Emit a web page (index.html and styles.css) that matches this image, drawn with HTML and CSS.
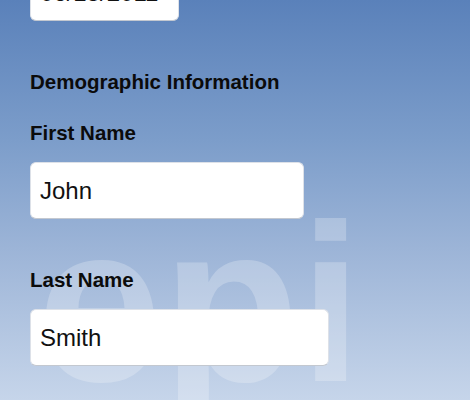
FILE: index.html
```html
<!DOCTYPE html>
<html lang="en">
<head>
<meta charset="utf-8">
<title>Demographic Information</title>
<link rel="stylesheet" href="styles.css">
</head>
<body>
<div class="screen">
  <div class="watermark" aria-hidden="true">epi</div>
  <form class="form">
    <input class="field field-date" type="text" value="06/15/2011">
    <h2 class="section-title">Demographic Information</h2>
    <label class="label" for="first">First Name</label>
    <input class="field field-first" id="first" type="text" value="John">
    <label class="label label-last" for="last">Last Name</label>
    <input class="field field-last" id="last" type="text" value="Smith">
  </form>
</div>
</body>
</html>
```
FILE: styles.css
```css
html, body {
  margin: 0;
  padding: 0;
}
body {
  width: 470px;
  height: 400px;
  overflow: hidden;
  font-family: "Liberation Sans", Arial, Helvetica, sans-serif;
}
.screen {
  position: relative;
  width: 470px;
  height: 400px;
  overflow: hidden;
  background: linear-gradient(180deg, #5a81ba 0%, #7c9dca 35%, #9cb4d7 62%, #c6d5ea 100%);
}
.watermark {
  position: absolute;
  left: 37px;
  top: 191px;
  font-family: "Liberation Sans", Arial, sans-serif;
  font-weight: 700;
  font-size: 225px;
  line-height: 225px;
  color: rgba(255, 255, 255, 0.24);
  z-index: 0;
  user-select: none;
}
.form {
  position: relative;
  z-index: 1;
  display: flex;
  flex-direction: column;
  align-items: flex-start;
  padding-left: 30px;
  margin-top: -36px;
}
.field {
  box-sizing: border-box;
  height: 57px;
  margin: 0;
  padding: 0 9px;
  border: 1px solid #dde1e8;
  border-bottom-color: #c3c8d0;
  border-radius: 6px;
  background: #fff;
  font-family: "Liberation Sans", Arial, sans-serif;
  font-size: 24px;
  color: #111;
  outline: none;
}
.field-date { width: 149px; }
.field-first { width: 274px; margin-top: 17px; }
.field-last { width: 299px; margin-top: 17px; }
.section-title {
  margin: 49px 0 0;
  font-size: 20.5px;
  line-height: 24px;
  font-weight: 700;
  color: #0b0b0b;
}
.label {
  margin-top: 27px;
  font-size: 20.5px;
  line-height: 24px;
  font-weight: 700;
  color: #0b0b0b;
}
.label-last { margin-top: 49px; }
```
